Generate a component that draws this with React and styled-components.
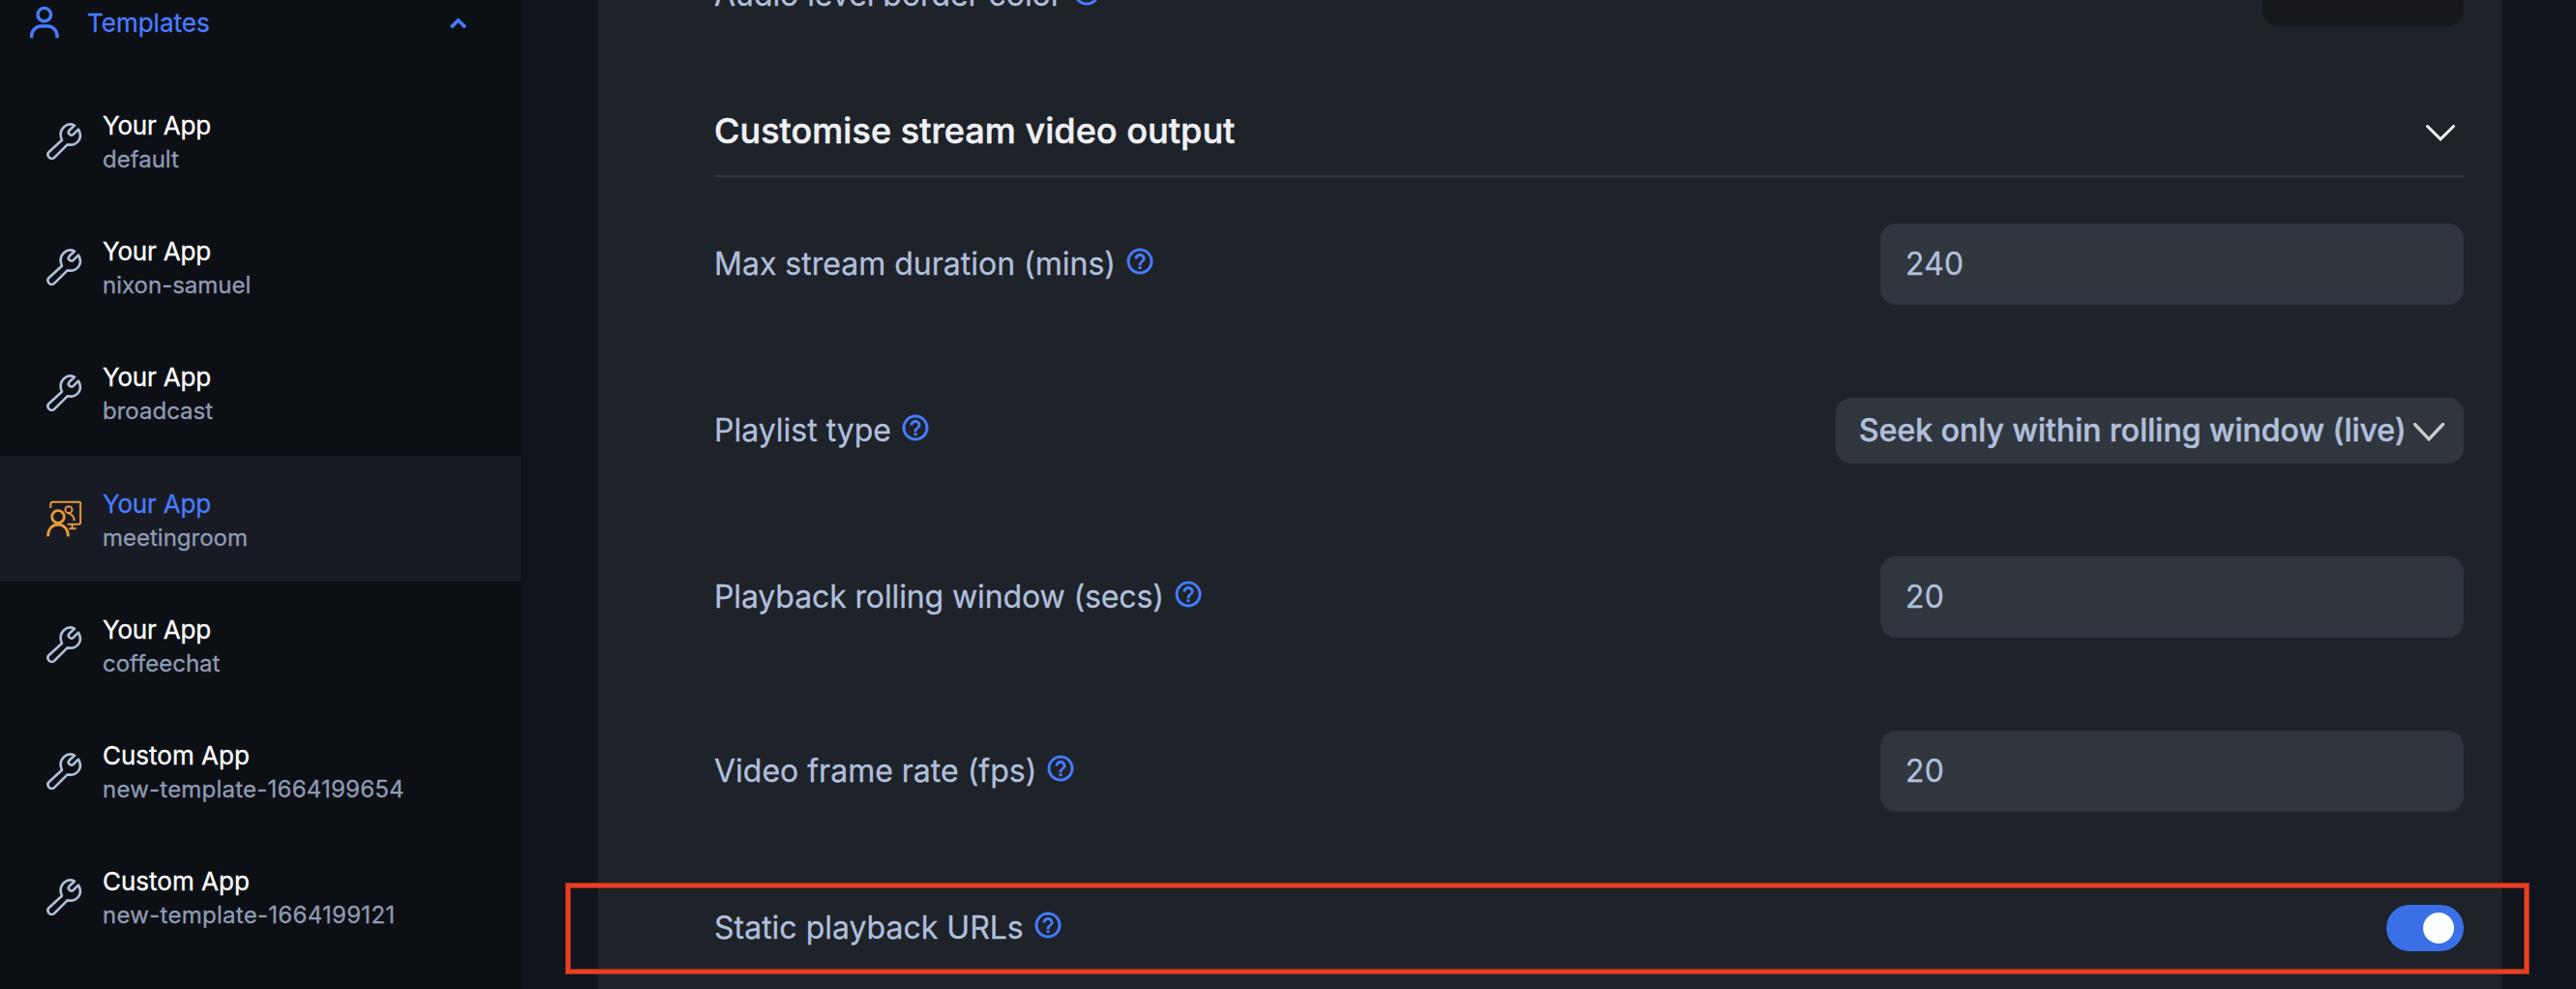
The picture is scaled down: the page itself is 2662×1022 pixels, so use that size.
import React from 'react';
import styled, { createGlobalStyle } from 'styled-components';
import { MdHelpOutline } from 'react-icons/md';

const colors = {
  page: '#10141c',
  sidebar: '#0c0f14',
  active: '#181b23',
  panel: '#1e2229',
  field: '#30363d',
  fieldBorder: '#2d3440',
  rule: '#31373f',
  text: '#b0bfdb',
  muted: '#8f9bb5',
  blue: '#477dff',
  orange: '#e8983c',
};

const GlobalStyle = createGlobalStyle`
  *, *::before, *::after { box-sizing: border-box; }
  body {
    margin: 0;
    overflow: hidden;
    background: ${colors.page};
    font-family: Inter, 'Liberation Sans', sans-serif;
    -webkit-text-stroke: 0.3px currentColor;
  }
`;

const Page = styled.div`
  display: flex;
  height: 1022px;
  overflow: hidden;
  background: ${colors.page};
`;

const Sidebar = styled.nav`
  width: 538px;
  flex: none;
  background: ${colors.sidebar};
`;

const SidebarHeader = styled.div`
  display: flex;
  align-items: center;
  height: 46px;
  margin-bottom: 34.5px;
  padding: 0 56px 0 31px;
  color: ${colors.blue};
  font-size: 26px;
  line-height: 46px;
`;

const SidebarTitle = styled.span`
  flex: 1;
  margin-left: 29px;
  padding-top: 1px;
`;

const AppList = styled.ul`
  margin: 0;
  padding: 0;
  list-style: none;
`;

const AppItem = styled.li`
  display: flex;
  align-items: center;
  gap: 21px;
  height: 130.2px;
  padding-left: 48px;
  background: ${(p) => (p.$active ? colors.active : 'transparent')};
  color: ${(p) => (p.$active ? colors.blue : '#ffffff')};
`;

const AppText = styled.div`
  display: flex;
  flex-direction: column;
  padding-top: 3px;
`;

const AppName = styled.span`
  font-size: 26px;
  line-height: 36px;
  letter-spacing: ${(p) => p.$tracking || 'normal'};
`;

const AppSlug = styled.span`
  font-size: 24px;
  line-height: 34px;
  color: ${colors.muted};
  letter-spacing: ${(p) => p.$tracking || 'normal'};
`;

const Main = styled.main`
  width: 1968px;
  height: 1022px;
  flex: none;
  margin-left: 80px;
  padding: 0 40px 0 120px;
  background: ${colors.panel};
`;

const Row = styled.div`
  display: flex;
  align-items: center;
  justify-content: space-between;
  height: ${(p) => p.$height}px;
`;

const ClippedRow = styled(Row)`
  margin-top: -37px;
`;

const Label = styled.div`
  display: flex;
  align-items: center;
  gap: 9px;
  color: ${colors.text};
  font-size: 32px;
  line-height: 48px;
  letter-spacing: ${(p) => p.$tracking || 'normal'};

  svg {
    margin-bottom: 6px;
    color: ${colors.blue};
    stroke-width: 0.25px;
  }

  svg path[fill='none'] {
    stroke: none;
  }
`;

const Swatch = styled.div`
  width: 208px;
  height: 64px;
  border-radius: 16px;
  background: #17181c;
`;

const SectionHeader = styled.div`
  display: flex;
  align-items: center;
  justify-content: space-between;
  height: 92px;
  margin-top: 64px;
  padding-right: 9px;
  border-bottom: 2px solid ${colors.rule};

  svg {
    margin-top: 3px;
  }
`;

const SectionTitle = styled.h2`
  margin: 0 0 2px;
  color: #eff1f5;
  font-size: 36px;
  font-weight: 500;
  line-height: 48px;
  letter-spacing: 0.05px;
  -webkit-text-stroke: 0.5px currentColor;
`;

const Settings = styled.div`
  position: relative;
  display: flex;
  flex-direction: column;
  gap: 96px;
  padding-top: 48px;
`;

const Field = styled.input`
  width: 603px;
  height: 84px;
  padding: 0 24px 2px;
  border: 2px solid ${colors.fieldBorder};
  border-radius: 16px;
  outline: none;
  background: ${colors.field};
  color: ${colors.text};
  font: 400 32px Inter, 'Liberation Sans', sans-serif;
  letter-spacing: 0.2px;
  -webkit-text-stroke: 0.3px currentColor;
`;

const Select = styled.button`
  display: flex;
  align-items: center;
  justify-content: space-between;
  width: 649px;
  height: 68px;
  padding: 0 20px 1px 24px;
  border: 0;
  border-radius: 16px;
  background: ${colors.field};
  color: ${colors.text};
  font: 500 32px Inter, 'Liberation Sans', sans-serif;
  -webkit-text-stroke: 0.5px currentColor;

  svg {
    margin-top: 4px;
  }
`;

const ToggleTrack = styled.button`
  display: flex;
  align-items: center;
  justify-content: flex-end;
  width: 80px;
  height: 48px;
  padding: 0 10px;
  border: 0;
  border-radius: 24px;
  background: #3b6fe6;
`;

const ToggleKnob = styled.span`
  width: 32px;
  height: 32px;
  border-radius: 50%;
  background: #fcfdff;
`;

const Highlight = styled.div`
  position: absolute;
  left: -153px;
  top: 730px;
  width: 2028px;
  height: 93px;
  border: 4px solid #ec3e24;
  box-shadow: 0 0 0 1px #8c2e20, inset 0 0 0 1px #8c2e20;
  pointer-events: none;
`;

const UserIcon = () => (
  <svg width="30" height="34" viewBox="0 0 30 34" fill="none" stroke="currentColor" strokeWidth="3.4">
    <circle cx="14.8" cy="9.2" r="6.8" />
    <path d="M1.7 33.2V31a10 10 0 0 1 10-10h6.300a10 10 0 0 1 10 10v2.200" />
  </svg>
);

const ChevronUp = () => (
  <svg width="17" height="14" viewBox="0 0 17 14" fill="none" stroke="currentColor" strokeWidth="3.6">
    <path d="M1.200 12.200 8.500 5l7.300 7.200" />
  </svg>
);

const WrenchIcon = () => (
  <svg width="37" height="38" viewBox="0 0 111 114" fill="none" stroke="#aebfda" strokeWidth="8" strokeLinecap="round" strokeLinejoin="round">
    <path d="M87 8 72 22c-5 5-5 9-1 13s8 4 13 0l15-15c6 9 7 20 4 29-5 14-20 22-38 18L25 107c-5 5-12 5-17 0-5-6-5-12 0-17L48 53C41 37 44 22 55 12c9-8 20-10 32-4Z" />
  </svg>
);

const MeetingIcon = () => (
  <svg width="37" height="38" viewBox="0 0 111 114" fill="none" stroke={colors.orange}>
    <g strokeWidth="6">
      <path d="M13 24V12q0-7 7-7h81q4.500 0 4.500 4.500V69q0 5-5 5H65" />
      <path d="M80 74v14M70 88h22" />
      <circle cx="69" cy="29" r="10.500" />
      <path d="M68 40c10 3 18 10 18 23" />
    </g>
    <g strokeWidth="8.5">
      <circle cx="36" cy="51" r="19" />
      <path d="M5 112C4 90 18 75 36 75s32 15 31 37" />
    </g>
  </svg>
);

const ChevronDown = ({ width, height, color, weight }) => (
  <svg width={width} height={height} viewBox={`0 0 ${width} ${height}`} fill="none" stroke={color} strokeWidth={weight}>
    <path d={`M1.500 1.500 ${width / 2} ${height - 2.2}l${width / 2 - 1.5}-${height - 3.7}`} strokeLinecap="round" />
  </svg>
);

const apps = [
  { name: 'Your App', slug: 'default' },
  { name: 'Your App', slug: 'nixon-samuel' },
  { name: 'Your App', slug: 'broadcast' },
  { name: 'Your App', slug: 'meetingroom', active: true },
  { name: 'Your App', slug: 'coffeechat' },
  { name: 'Custom App', slug: 'new-template-1664199654', tracking: '0.22px' },
  { name: 'Custom App', slug: 'new-template-1664199121', tracking: '0.28px' },
];

const Help = ({ children, tracking }) => (
  <Label $tracking={tracking}>
    {children}
    <MdHelpOutline size={32} />
  </Label>
);

export default function App() {
  return (
    <>
      <GlobalStyle />
      <Page>
        <Sidebar>
          <SidebarHeader>
            <UserIcon />
            <SidebarTitle>Templates</SidebarTitle>
            <ChevronUp />
          </SidebarHeader>
          <AppList>
            {apps.map((app) => (
              <AppItem key={app.slug} $active={app.active}>
                {app.active ? <MeetingIcon /> : <WrenchIcon />}
                <AppText>
                  <AppName $tracking={app.name === 'Your App' ? '-0.2px' : undefined}>{app.name}</AppName>
                  <AppSlug $tracking={app.tracking}>{app.slug}</AppSlug>
                </AppText>
              </AppItem>
            ))}
          </AppList>
        </Sidebar>
        <Main>
          <ClippedRow $height={64}>
            <Help tracking="-0.06px">Audio level border color</Help>
            <Swatch />
          </ClippedRow>
          <SectionHeader>
            <SectionTitle>Customise stream video output</SectionTitle>
            <ChevronDown width={30} height={17} color="#eff1f5" weight={3} />
          </SectionHeader>
          <Settings>
            <Row $height={84}>
              <Help>Max stream duration (mins)</Help>
              <Field defaultValue="240" />
            </Row>
            <Row $height={68}>
              <Help>Playlist type</Help>
              <Select>
                Seek only within rolling window (live)
                <ChevronDown width={32} height={19} color="#cccccc" weight={3.4} />
              </Select>
            </Row>
            <Row $height={84}>
              <Help tracking="-0.12px">Playback rolling window (secs)</Help>
              <Field defaultValue="20" />
            </Row>
            <Row $height={84}>
              <Help>Video frame rate (fps)</Help>
              <Field defaultValue="20" />
            </Row>
            <Row $height={48}>
              <Help>Static playback URLs</Help>
              <ToggleTrack>
                <ToggleKnob />
              </ToggleTrack>
            </Row>
            <Highlight />
          </Settings>
        </Main>
      </Page>
    </>
  );
}
